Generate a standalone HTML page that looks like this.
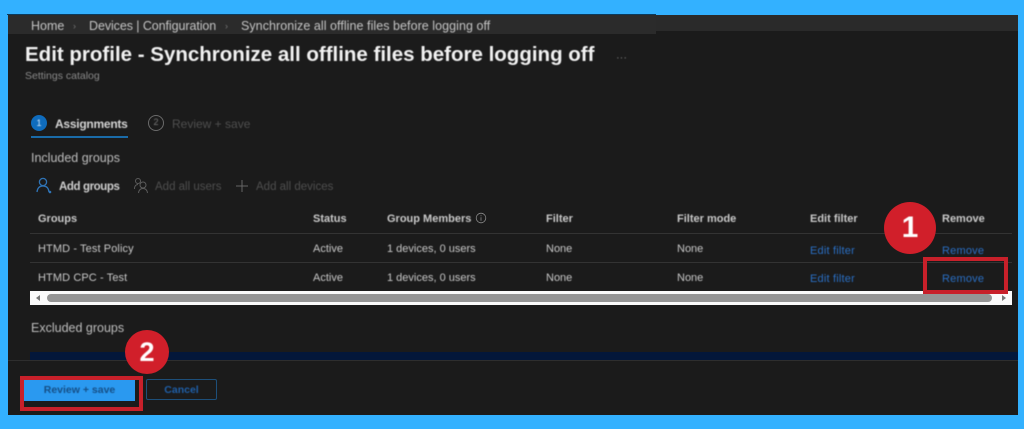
<!DOCTYPE html>
<html>
<head>
<meta charset="utf-8">
<style>
html,body{margin:0;padding:0;width:1024px;height:429px;overflow:hidden;background:#33b1ff;}
body{position:relative;font-family:"Liberation Sans",sans-serif;}
.a{position:absolute;}
.t{position:absolute;white-space:nowrap;line-height:16px;font-size:11px;color:#c8c8c8;filter:blur(0.4px);}
.h{font-weight:bold;color:#c9c9c9;}
.l{color:#2a6fc4;letter-spacing:.2px;}
.d{color:#4f4f4f;}
</style>
</head>
<body>
<div class="a" style="left:8px;top:15px;width:1010px;height:400px;background:#1b1b1b;"></div>
<div class="a" style="left:7px;top:14px;width:649px;height:1px;background:#0b3a5c;"></div>
<div class="a" style="left:656px;top:15px;width:362px;height:16px;background:#2a2a2a;"></div>
<div class="a" style="left:8px;top:15px;width:648px;height:19px;background:#2b2b2b;"></div>

<div class="t" style="left:31px;top:18px;font-size:12.5px;color:#c4c4c4;">Home</div>
<div class="t" style="left:73px;top:18px;font-size:9px;color:#777;">›</div>
<div class="t" style="left:89px;top:18px;font-size:12.5px;color:#c4c4c4;letter-spacing:-.08px;">Devices | Configuration</div>
<div class="t" style="left:225px;top:18px;font-size:9px;color:#777;">›</div>
<div class="t" style="left:241px;top:18px;font-size:12.5px;color:#c4c4c4;letter-spacing:.05px;">Synchronize all offline files before logging off</div>

<div class="t" style="left:25px;top:42px;font-size:20.5px;line-height:26px;font-weight:bold;color:#f2f2f2;">Edit profile - Synchronize all offline files before logging off</div>
<div class="t" style="left:616px;top:50px;font-size:11px;color:#777;">···</div>
<div class="t" style="left:25px;top:68px;font-size:10.5px;color:#8a8a8a;">Settings catalog</div>

<div class="a" style="left:31px;top:115px;width:16px;height:16px;border-radius:50%;background:#0f6cbd;"></div>
<div class="t" style="left:31px;top:115px;width:16px;text-align:center;font-size:9px;color:#cfe4f7;">1</div>
<div class="t" style="left:55px;top:116px;font-size:12px;font-weight:bold;color:#d4d4d4;letter-spacing:-.25px;">Assignments</div>
<div class="a" style="left:31px;top:136px;width:97px;height:2px;background:#1a6ba8;"></div>
<div class="a" style="left:148px;top:115px;width:14px;height:14px;border-radius:50%;border:1px solid #6a6a6a;"></div>
<div class="t" style="left:148px;top:114px;width:16px;text-align:center;font-size:9px;color:#777;">2</div>
<div class="t d" style="left:172px;top:116px;font-size:12px;">Review + save</div>

<div class="t" style="left:31px;top:150px;font-size:12.5px;color:#bdbdbd;">Included groups</div>

<svg class="a" style="left:35px;top:177px;" width="20" height="18" viewBox="0 0 20 18" fill="none">
<circle cx="8" cy="5" r="3.6" stroke="#2f73b5" stroke-width="1.3"/>
<path d="M2 15c.4-4 2.600-6 6-6s5.600 2 6 6" stroke="#2f73b5" stroke-width="1.300"/>
<circle cx="15" cy="15" r="1.300" fill="#2f73b5"/>
</svg>
<div class="t" style="left:59px;top:179px;font-size:11.5px;font-weight:bold;color:#cfcfcf;letter-spacing:-.4px;">Add groups</div>
<svg class="a" style="left:133px;top:177px;" width="18" height="18" viewBox="0 0 18 18" fill="none" stroke="#5c5c5c" stroke-width="1">
<circle cx="5" cy="4" r="2.500"/>
<path d="M1.500 12c0-3 1.500-4.500 3.500-4.500"/>
<circle cx="10" cy="8" r="3"/>
<path d="M5.500 16c.4-3 2-4.500 4.500-4.500s4.100 1.500 4.500 4.500"/>
</svg>
<div class="t d" style="left:155px;top:179px;font-size:11.5px;">Add all users</div>
<svg class="a" style="left:235px;top:179px;" width="14" height="14" viewBox="0 0 14 14" stroke="#666" stroke-width="1"><path d="M7 1v12M1 7h12"/></svg>
<div class="t d" style="left:256px;top:179px;font-size:11.5px;">Add all devices</div>

<div class="t h" style="left:38px;top:211px;">Groups</div>
<div class="t h" style="left:313px;top:211px;">Status</div>
<div class="t h" style="left:387px;top:211px;">Group Members</div>
<svg class="a" style="left:475px;top:212px;" width="12" height="12" viewBox="0 0 12 12" fill="none" stroke="#8a8a8a" stroke-width=".8"><circle cx="6" cy="6" r="4.800"/><path d="M6 5.300v3.400M6 3.300v1"/></svg>
<div class="t h" style="left:546px;top:211px;">Filter</div>
<div class="t h" style="left:677px;top:211px;">Filter mode</div>
<div class="t h" style="left:810px;top:211px;">Edit filter</div>
<div class="t h" style="left:942px;top:211px;">Remove</div>

<div class="a" style="left:30px;top:233px;width:982px;height:1px;background:#333;"></div>
<div class="a" style="left:30px;top:262px;width:982px;height:1px;background:#333;"></div>

<div class="t" style="left:38px;top:241px;letter-spacing:.1px;">HTMD - Test Policy</div>
<div class="t" style="left:313px;top:241px;">Active</div>
<div class="t" style="left:387px;top:241px;">1 devices, 0 users</div>
<div class="t" style="left:546px;top:241px;">None</div>
<div class="t" style="left:677px;top:241px;">None</div>
<div class="t l" style="left:810px;top:243px;">Edit filter</div>
<div class="t l" style="left:942px;top:243px;">Remove</div>

<div class="t" style="left:38px;top:270px;letter-spacing:.1px;">HTMD CPC - Test</div>
<div class="t" style="left:313px;top:270px;">Active</div>
<div class="t" style="left:387px;top:270px;">1 devices, 0 users</div>
<div class="t" style="left:546px;top:270px;">None</div>
<div class="t" style="left:677px;top:270px;">None</div>
<div class="t l" style="left:810px;top:271px;">Edit filter</div>
<div class="t l" style="left:942px;top:271px;">Remove</div>

<div class="a" style="left:30px;top:291px;width:982px;height:14px;background:#fafafa;"></div>
<div class="a" style="left:47px;top:294px;width:945px;height:8px;border-radius:4px;background:#959595;"></div>
<div class="a" style="left:36px;top:295px;width:0;height:0;border:3px solid transparent;border-left:0;border-right:4px solid #777;"></div>
<div class="a" style="left:1002px;top:295px;width:0;height:0;border:3px solid transparent;border-right:0;border-left:4px solid #777;"></div>

<div class="t" style="left:31px;top:320px;font-size:12.5px;color:#bdbdbd;">Excluded groups</div>

<div class="a" style="left:30px;top:352px;width:988px;height:8px;background:#03173a;"></div>
<div class="a" style="left:8px;top:360px;width:1010px;height:1px;background:#2e2e2e;"></div>

<div class="a" style="left:20px;top:376px;width:123px;height:35px;box-sizing:border-box;border:4px solid #c8202a;"></div>
<div class="a" style="left:24px;top:380px;width:111px;height:21px;background:#2a99f0;"></div>
<div class="t" style="left:24px;top:382px;width:111px;text-align:center;font-size:10.5px;font-weight:bold;color:#164f86;">Review + save</div>
<div class="a" style="left:146px;top:379px;width:71px;height:21px;box-sizing:border-box;border:1px solid #1d4f7a;border-radius:2px;"></div>
<div class="t" style="left:146px;top:382px;width:71px;text-align:center;font-size:10.5px;font-weight:bold;color:#1f5fa8;">Cancel</div>

<div class="a" style="left:125px;top:330px;width:44px;height:44px;border-radius:50%;background:#d11f2a;"></div>
<div class="t" style="left:125px;top:330px;width:44px;line-height:44px;text-align:center;font-size:27px;font-weight:bold;color:#fff;">2</div>

<div class="a" style="left:884px;top:202px;width:52px;height:52px;border-radius:50%;background:#d11f2a;"></div>
<div class="t" style="left:884px;top:202px;width:52px;line-height:52px;text-align:center;font-size:30px;font-weight:bold;color:#fff;">1</div>

<div class="a" style="left:923px;top:257px;width:85px;height:37px;box-sizing:border-box;border:4px solid #c8202a;"></div>
</body>
</html>
